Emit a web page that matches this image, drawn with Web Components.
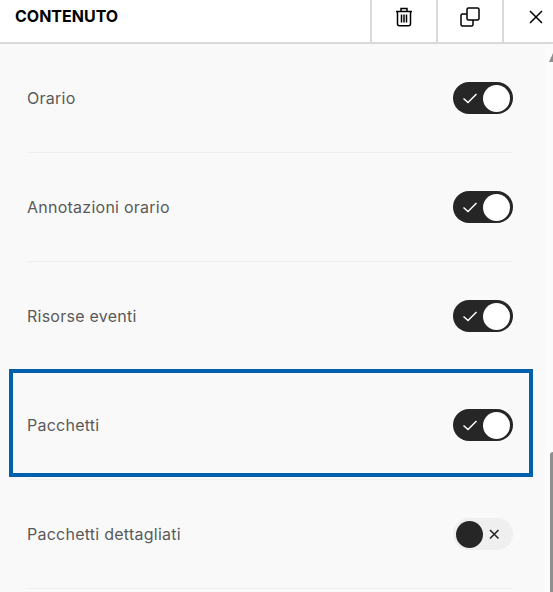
<!DOCTYPE html>
<html>
<head>
<meta charset="utf-8">
<style>
  html, body { margin: 0; height: 100%; overflow: hidden; background: #f9f9f9; }
  body { font-family: Inter, "Liberation Sans", sans-serif; }
</style>
</head>
<body>
<content-panel>
  <setting-row label="Orario" on></setting-row>
  <setting-row label="Annotazioni orario" on></setting-row>
  <setting-row label="Risorse eventi" on></setting-row>
  <setting-row label="Pacchetti" on focused></setting-row>
  <setting-row label="Pacchetti dettagliati"></setting-row>
</content-panel>
<script>
class ToggleSwitch extends HTMLElement {
  connectedCallback() {
    const on = this.hasAttribute('on');
    this.attachShadow({ mode: 'open' });
    this.shadowRoot.innerHTML = `
      <style>
        :host {
          display: flex;
          align-items: center;
          justify-content: space-between;
          box-sizing: border-box;
          width: 60px;
          height: 32px;
          padding: 0 3px;
          border-radius: 16px;
          background: ${on ? '#262626' : '#efefef'};
        }
        .knob {
          flex: none;
          width: 27px;
          height: 27px;
          border-radius: 50%;
          background: ${on ? '#fff' : '#262626'};
        }
        svg { display: block; flex: none; width: 26px; height: 26px; fill: none; }
      </style>
      ${on
        ? `<svg viewBox="0 0 26 26" stroke="#fff" stroke-width="1.5"><path d="M7.500 13.500l4.500 4 8.500-8.500"/></svg><div class="knob"></div>`
        : `<div class="knob"></div><svg viewBox="0 0 26 26" stroke="#262626" stroke-width="1.6"><path d="M6 9l8.500 8.500M14.500 9l-8.500 8.500"/></svg>`}
    `;
  }
}

class SettingRow extends HTMLElement {
  connectedCallback() {
    this.attachShadow({ mode: 'open' });
    this.shadowRoot.innerHTML = `
      <style>
        :host {
          display: flex;
          align-items: center;
          justify-content: space-between;
          position: relative;
          height: 108px;
          border-bottom: 1px solid #efefef;
          font-size: 16px;
          letter-spacing: 0.25px;
          color: #595959;
        }
        .focus {
          position: absolute;
          left: -18px;
          right: -20px;
          top: -2px;
          bottom: 2px;
          border: 4px solid #0060aa;
          pointer-events: none;
        }
      </style>
      <span>${this.getAttribute('label')}</span>
      <toggle-switch ${this.hasAttribute('on') ? 'on' : ''}></toggle-switch>
      ${this.hasAttribute('focused') ? '<div class="focus"></div>' : ''}
    `;
  }
}

class ContentPanel extends HTMLElement {
  connectedCallback() {
    this.attachShadow({ mode: 'open' });
    this.shadowRoot.innerHTML = `
      <style>
        :host { display: block; position: relative; height: 592px; overflow: hidden; }
        header {
          display: flex;
          align-items: stretch;
          height: 42px;
          overflow: hidden;
          background: #fff;
          border-bottom: 2px solid #d9d9d9;
        }
        h1 {
          flex: none;
          width: 355px;
          margin: 0;
          padding: 6px 0 0 15px;
          font-size: 16px;
          font-weight: 700;
          color: #000;
        }
        button {
          flex: none;
          box-sizing: border-box;
          width: 66px;
          padding: 0 0 9px;
          border: 0;
          border-left: 2px solid #d9d9d9;
          background: none;
          display: flex;
          align-items: center;
          justify-content: center;
        }
        button svg { width: 20px; height: 20px; fill: none; stroke: #000; stroke-width: 1.5; }
        .list { padding: 0 40px 0 27px; }
        .track {
          position: absolute;
          right: 0;
          top: 44px;
          bottom: 0;
          width: 8px;
          background: #fbfbfb;
        }
        .arrow {
          position: absolute;
          right: 0;
          top: 53px;
          width: 0;
          height: 0;
          border-left: 4px solid transparent;
          border-bottom: 9px solid #8f8f8f;
        }
        .thumb {
          position: absolute;
          right: 0;
          top: 452px;
          bottom: 0;
          width: 3px;
          border-radius: 3px 0 0 0;
          background: #8f8f8f;
        }
      </style>
      <header>
        <h1>CONTENUTO</h1>
        <button aria-label="Elimina">
          <svg viewBox="0 0 20 20"><path d="M2 4.500h16M7 4.500V1.500h6v3M3.500 4.500v12.200a2 2 0 0 0 2 2h9a2 2 0 0 0 2-2V4.500M7.500 7.500v8M10 7.500v8M12.500 7.500v8"/></svg>
        </button>
        <button aria-label="Duplica">
          <svg viewBox="0 0 20 20"><rect x="7" y="1" width="12" height="12" rx="1.500"/><path d="M7 7H2.500A1.500 1.500 0 0 0 1 8.500v9A1.500 1.500 0 0 0 2.500 19h9a1.500 1.500 0 0 0 1.500-1.500V13"/></svg>
        </button>
        <button aria-label="Chiudi">
          <svg viewBox="0 0 20 20"><path d="M4 4l12 12M16 4L4 16"/></svg>
        </button>
      </header>
      <div class="list"><slot></slot></div>
      <div class="track"></div>
      <div class="arrow"></div>
      <div class="thumb"></div>
    `;
  }
}

customElements.define('toggle-switch', ToggleSwitch);
customElements.define('setting-row', SettingRow);
customElements.define('content-panel', ContentPanel);
</script>
</body>
</html>
